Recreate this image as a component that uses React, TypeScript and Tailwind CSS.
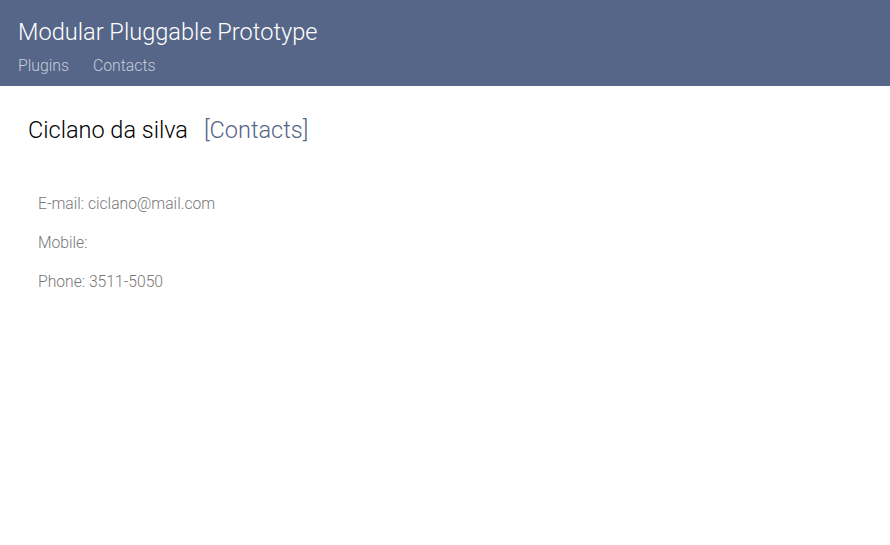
export default function App() {
  return (
    <div className="min-h-[545px] bg-white font-['Roboto',sans-serif] font-light">
      <header className="h-[86px] bg-[#566688] px-[18px] pt-[16px]">
        <h1 className="text-[23.6px] leading-[32px] text-white">Modular Pluggable Prototype</h1>
        <nav className="mt-[8px] flex gap-[24px] text-[15.8px] leading-[20px] text-[#c6cddb]">
          <a>Plugins</a>
          <a>Contacts</a>
        </nav>
      </header>
      <main className="px-[28px] pt-[28px]">
        <h2 className="flex gap-[16px] text-[23.5px] leading-[32px] text-black">
          <span>Ciclano da silva</span>
          <a className="text-[#566688]">[Contacts]</a>
        </h2>
        <div className="mt-[47px] flex flex-col gap-[18px] px-[10px] text-[15.7px] leading-[21px] text-[#777]">
          <p>E-mail: ciclano@mail.com</p>
          <p>Mobile:</p>
          <p>Phone: 3511-5050</p>
        </div>
      </main>
    </div>
  );
}
